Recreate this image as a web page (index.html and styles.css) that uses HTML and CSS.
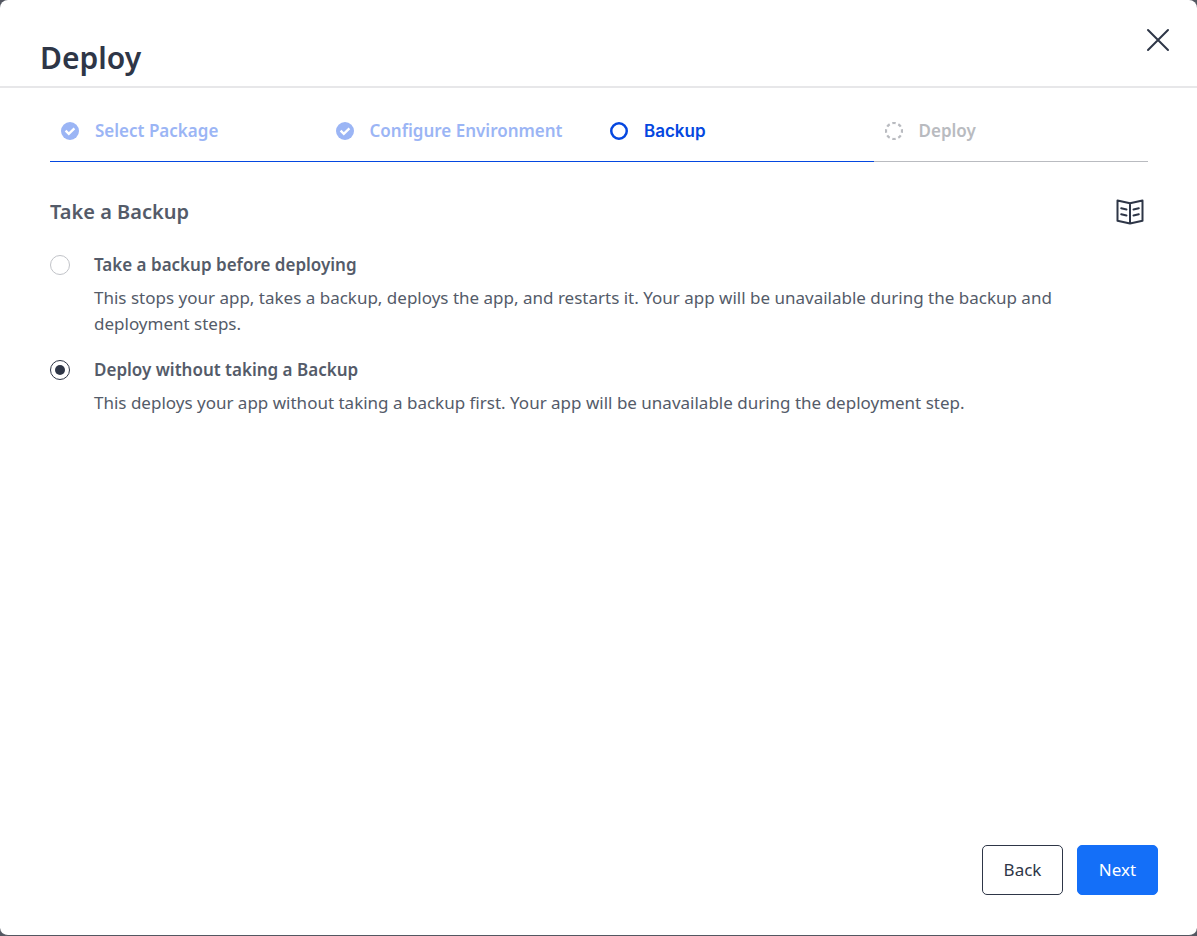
FILE: index.html
```
<!DOCTYPE html>
<html lang="en">
<head>
<meta charset="utf-8">
<title>Deploy</title>
<link rel="stylesheet" href="styles.css">
</head>
<body>
<div class="dialog" role="dialog" aria-labelledby="dialog-title">
  <header class="dialog-header">
    <h1 class="dialog-title" id="dialog-title">Deploy</h1>
    <button class="icon-button" type="button" aria-label="Close">
      <svg width="24" height="24" viewBox="0 0 24 24" fill="none" stroke="currentColor" stroke-width="2" stroke-linecap="round"><path d="M2 2 22 22M22 2 2 22"/></svg>
    </button>
  </header>
  <main class="dialog-body">
    <ol class="steps">
      <li class="step step-done">
        <svg class="step-icon" viewBox="0 0 18 18"><circle cx="9" cy="9" r="9" fill="currentColor"/><path d="M4.600 8.700 7.800 11.800 13.400 6.400" fill="none" stroke="#fff" stroke-width="2.400"/></svg>
        <span>Select Package</span>
      </li>
      <li class="step step-done">
        <svg class="step-icon" viewBox="0 0 18 18"><circle cx="9" cy="9" r="9" fill="currentColor"/><path d="M4.600 8.700 7.800 11.800 13.400 6.400" fill="none" stroke="#fff" stroke-width="2.400"/></svg>
        <span>Configure Environment</span>
      </li>
      <li class="step step-current" aria-current="step">
        <svg class="step-icon" viewBox="0 0 18 18"><circle cx="9" cy="9" r="7.75" fill="none" stroke="currentColor" stroke-width="2.5"/></svg>
        <span>Backup</span>
      </li>
      <li class="step step-pending">
        <svg class="step-icon" viewBox="0 0 18 18"><circle cx="9" cy="9" r="8" fill="none" stroke="currentColor" stroke-width="2.2" pathLength="80" stroke-dasharray="5.5 4.5" stroke-dashoffset="2.75"/></svg>
        <span>Deploy</span>
      </li>
    </ol>
    <div class="section-header">
      <h2 class="section-title">Take a Backup</h2>
      <button class="icon-button docs-button" type="button" aria-label="Documentation">
        <svg width="28" height="28" viewBox="0 -1 28 28" fill="none" stroke="currentColor" stroke-width="2" stroke-linecap="round" stroke-linejoin="round"><path d="M14 4.300 1.500 1.500V21.800L14 24.500 26.500 21.800V1.500ZM14 4.300V24.500M5.200 9.200 10.500 10.500M5.200 15.200 10.500 16.500M17.500 10.500 22.800 9.200M17.500 16.500 22.800 15.200"/></svg>
      </button>
    </div>
    <div class="options">
      <div class="option">
        <input class="radio" type="radio" name="backup" id="with-backup" aria-describedby="with-text">
        <div class="option-content">
          <label class="option-label" for="with-backup">Take a backup before deploying</label>
          <p class="option-text" id="with-text">This stops your app, takes a backup, deploys the app, and restarts it. Your app will be unavailable during the backup and deployment steps.</p>
        </div>
      </div>
      <div class="option">
        <input class="radio" type="radio" name="backup" id="without-backup" aria-describedby="without-text" checked>
        <div class="option-content">
          <label class="option-label" for="without-backup">Deploy without taking a Backup</label>
          <p class="option-text" id="without-text">This deploys your app without taking a backup first. Your app will be unavailable during the deployment step.</p>
        </div>
      </div>
    </div>
  </main>
  <footer class="dialog-footer">
    <button class="button button-outline" type="button">Back</button>
    <button class="button button-primary" type="button">Next</button>
  </footer>
</div>
</body>
</html>
```
FILE: styles.css
```
* { box-sizing: border-box; }
body {
  margin: 0;
  background: #535761;
  color: #545b69;
  font-family: "Noto Sans", sans-serif;
  font-size: 17px;
  line-height: 26px;
}
h1, h2, p, ol { margin: 0; padding: 0; }
svg { display: block; }
.dialog {
  display: flex;
  flex-direction: column;
  min-height: 100vh;
  background: #fff;
  border-bottom: 1px solid #535761;
  border-radius: 8px;
}
.dialog-header {
  display: flex;
  justify-content: space-between;
  align-items: flex-start;
  padding: 28px 27px 0 40px;
  border-bottom: 2px solid #e7e7e9;
}
.dialog-title {
  padding: 10px 0 8px;
  color: #2e3647;
  font-size: 30px;
  font-weight: 600;
  line-height: 40px;
}
.icon-button {
  padding: 0;
  border: 0;
  background: none;
  color: #2e3647;
  cursor: pointer;
}
.dialog-body { flex: 1; padding: 0 49px 0 50px; }
.steps {
  display: grid;
  grid-template-columns: repeat(4, 1fr);
  list-style: none;
}
.step {
  display: flex;
  align-items: center;
  gap: 16px;
  padding: 30px 0 17px 11px;
  border-bottom: 1px solid #0547e0;
  color: #0547e0;
  font-weight: 600;
}
.step-icon { width: 18px; height: 18px; }
.step-done { color: #9bb5f5; }
.step-current { font-family: Inter, sans-serif; }
.step-pending { color: #b9bbc0; border-color: #b9bbc0; }
.section-header {
  display: flex;
  justify-content: space-between;
  align-items: center;
  padding: 36px 4px 26px 0;
}
.section-title { font-size: 20px; font-weight: 600; line-height: 28px; }
.options { display: grid; gap: 20px; }
.option { display: flex; gap: 24px; }
.radio {
  appearance: none;
  flex: none;
  display: grid;
  place-items: center;
  width: 20px;
  height: 20px;
  margin: 3px 0 0;
  border: 1px solid #c1c3c8;
  border-radius: 50%;
  background: #fff;
}
.radio:checked { border-color: #2e3647; }
.radio:checked::before {
  content: "";
  width: 10px;
  height: 10px;
  border-radius: 50%;
  background: #2e3647;
}
.option-label { display: block; font-weight: 600; }
.option-text { margin-top: 7px; }
.dialog-footer {
  display: flex;
  justify-content: flex-end;
  gap: 14px;
  padding: 24px 39px 40px;
}
.button {
  min-width: 81px;
  height: 50px;
  padding: 0 20px;
  border: 1px solid #2e3647;
  border-radius: 5px;
  background: #fff;
  color: #2e3647;
  font: inherit;
  cursor: pointer;
}
.button-primary { border-color: #146ff8; background: #146ff8; color: #fff; }
```
